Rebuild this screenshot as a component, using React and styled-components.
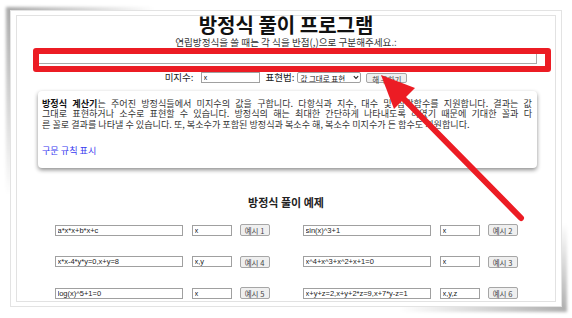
import React from 'react';
import styled, { createGlobalStyle } from 'styled-components';

const RED = '#ec1c24';
const KR = '"Noto Sans CJK KR", "Noto Sans", sans-serif';
const LATIN = '"Liberation Sans", "Noto Sans CJK KR", sans-serif';

const EXAMPLES = [
    { id: 1, eq: 'a*x*x+b*x+c', vars: 'x' },
    { id: 2, eq: 'sin(x)^3+1', vars: 'x' },
    { id: 4, eq: 'x*x-4*y*y=0,x+y=8', vars: 'x,y' },
    { id: 3, eq: 'x^4+x^3+x^2+x+1=0', vars: 'x' },
    { id: 5, eq: 'log(x)^5+1=0', vars: 'x' },
    { id: 6, eq: 'x+y+z=2,x+y+2*z=9,x+7*y-z=1', vars: 'x,y,z' },
];

const GlobalStyle = createGlobalStyle`
    html, body {
        margin: 0;
        padding: 0;
        background: #fff;
    }
    body {
        font-family: ${KR};
        color: #222;
    }
`;

const Canvas = styled.div`
    position: relative;
    width: 572px;
    height: 318px;
    box-sizing: border-box;
    padding: 10px 10px 0 10px;
    background: #fff;
    isolation: isolate;
    overflow: hidden;
`;

const Paper = styled.div`
    position: relative;
    height: 297px;
    box-sizing: border-box;
    padding: 4px 5px;
    border: 1px solid #e3e3e3;
    background: #fff;

    &::before {
        content: '';
        position: absolute;
        top: -4px;
        left: -5px;
        width: 150px;
        height: 190px;
        background: radial-gradient(ellipse at 0 0, rgba(0, 0, 0, 0.34), rgba(0, 0, 0, 0) 70%);
        filter: blur(1.5px);
        z-index: -1;
    }

    &::after {
        content: '';
        position: absolute;
        right: -6px;
        bottom: -6px;
        width: 170px;
        height: 90px;
        background: radial-gradient(ellipse at 100% 100%, rgba(0, 0, 0, 0.32), rgba(0, 0, 0, 0) 70%);
        filter: blur(1.5px);
        z-index: -1;
    }
`;

const Page = styled.div`
    height: 100%;
    box-sizing: border-box;
    border: 1px solid #e2e2e2;
    display: flex;
    flex-direction: column;
    align-items: center;
`;

const Title = styled.h1`
    margin: 0;
    font-size: 20px;
    line-height: 18px;
    font-weight: 700;
    color: #111;
`;

const Hint = styled.p`
    margin: 2px 0 0;
    font-size: 9.6px;
    line-height: 12px;
    color: #333;
`;

const EquationWrap = styled.div`
    position: relative;
    width: 502px;
    margin-top: 2px;
`;

const EquationInput = styled.input`
    display: block;
    width: 100%;
    height: 14px;
    box-sizing: border-box;
    border: 1px solid #aaa;
    padding: 0 2px;
    font: 8px ${LATIN};
`;

const RedMark = styled.div`
    position: absolute;
    top: -2px;
    left: -2px;
    right: -14px;
    bottom: -8px;
    border: 6px solid ${RED};
    border-radius: 3px;
    pointer-events: none;
`;

const ControlRow = styled.div`
    display: flex;
    align-items: center;
    height: 11px;
    margin-top: 8px;
`;

const Label = styled.label`
    font-size: 9.5px;
    line-height: 11px;
    color: #222;
    margin-right: ${(p) => p.$gap}px;
`;

const SmallInput = styled.input`
    box-sizing: border-box;
    width: ${(p) => p.$w}px;
    height: 11px;
    border: 1px solid #a0a0a0;
    padding: 0 2px;
    margin: 0 ${(p) => p.$after || 0}px 0 0;
    font: 7.5px ${LATIN};
    color: #222;
`;

const SelectWrap = styled.div`
    position: relative;
    width: 64px;
    height: 11px;
    margin-right: 5px;

    svg {
        position: absolute;
        right: 2px;
        top: 3px;
        pointer-events: none;
    }
`;

const Select = styled.select`
    appearance: none;
    display: block;
    width: 100%;
    height: 100%;
    box-sizing: border-box;
    border: 1px solid #a0a0a0;
    border-radius: 2px;
    padding: 0 2px;
    background: #fff;
    font: 7.5px ${KR};
    color: #222;
`;

const Button = styled.button`
    box-sizing: border-box;
    width: ${(p) => p.$w}px;
    height: ${(p) => p.$h}px;
    padding: 0;
    border: 1px solid #a6a6a6;
    border-radius: 2px;
    background: #efefef;
    font: 7.5px ${KR};
    color: #444;
    white-space: nowrap;
`;

const Card = styled.div`
    width: 499px;
    box-sizing: border-box;
    margin: 8px 0 0 3px;
    padding: 6.5px 5px 12.75px 4px;
    border-radius: 4px;
    background: #fff;
    box-shadow: 0 2px 4px rgba(0, 0, 0, 0.45);
`;

const Paragraph = styled.p`
    margin: ${(p) => p.$top || 0}px 0 0;
    font-size: 9.1px;
    line-height: 10.5px;
    color: #333;

    b {
        color: #111;
    }
`;

const Line = styled.span`
    display: block;
    text-align: justify;
    text-align-last: ${(p) => (p.$fill ? 'justify' : 'start')};
    white-space: nowrap;
`;

const Link = styled.a`
    color: #3a3af0;
    text-decoration: none;
`;

const SectionTitle = styled.h2`
    margin: 27px 0 0;
    font-size: 11px;
    line-height: 14px;
    font-weight: 700;
    color: #222;
`;

const ExampleGrid = styled.div`
    display: grid;
    grid-template-columns: repeat(2, auto);
    column-gap: 33px;
    row-gap: 19.5px;
    margin-top: 15.3px;
`;

const Example = styled.div`
    display: flex;
    align-items: center;
    height: 12px;
`;

const Arrow = styled.svg`
    position: absolute;
    left: 0;
    top: 0;
    z-index: 2;
    pointer-events: none;
`;

const App = () => {
    return (
        <Canvas>
            <GlobalStyle />
            <Paper>
                <Page>
                    <Title>방정식 풀이 프로그램</Title>
                    <Hint>연립방정식을 쓸 때는 각 식을 반점(,)으로 구분해주세요.:</Hint>
                    <EquationWrap>
                        <EquationInput type="text" defaultValue="" />
                        <RedMark />
                    </EquationWrap>
                    <ControlRow>
                        <Label $gap={7}>미지수:</Label>
                        <SmallInput $w={59} $after={6} defaultValue="x" />
                        <Label $gap={3}>표현법:</Label>
                        <SelectWrap>
                            <Select defaultValue="exact">
                                <option value="exact">값 그대로 표현</option>
                                <option value="decimal">소수로 표현</option>
                            </Select>
                            <svg width="6" height="5" viewBox="0 0 6 5">
                                <path d="M0.8 1.2 L3 3.4 L5.2 1.2" fill="none" stroke="#222" strokeWidth="1.1" />
                            </svg>
                        </SelectWrap>
                        <Button $w={41} $h={10}>해 구하기</Button>
                    </ControlRow>
                    <Card>
                        <Paragraph>
                            <Line $fill>
                                <b>방정식 계산기</b>는 주어진 방정식들에서 미지수의 값을 구합니다. 다항식과 지수, 대수 및 삼각함수를 지원합니다. 결과는 값
                            </Line>
                            <Line $fill>
                                그대로 표현하거나 소수로 표현할 수 있습니다. 방정식의 해는 최대한 간단하게 나타내도록 하였기 때문에 기대한 꼴과 다
                            </Line>
                            <Line>
                                른 꼴로 결과를 나타낼 수 있습니다. 또, 복소수가 포함된 방정식과 복소수 해, 복소수 미지수가 든 함수도 지원합니다.
                            </Line>
                        </Paragraph>
                        <Paragraph $top={15.5}>
                            <Link href="#syntax">구문 규칙 표시</Link>
                        </Paragraph>
                    </Card>
                    <SectionTitle>방정식 풀이 예제</SectionTitle>
                    <ExampleGrid>
                        {EXAMPLES.map((ex) => (
                            <Example key={ex.id}>
                                <SmallInput $w={128} $after={9} defaultValue={ex.eq} />
                                <SmallInput $w={40} $after={8} defaultValue={ex.vars} />
                                <Button $w={30} $h={12}>예시 {ex.id}</Button>
                            </Example>
                        ))}
                    </ExampleGrid>
                </Page>
            </Paper>
            <Arrow width="572" height="318" viewBox="0 0 572 318">
                <line x1="521" y1="218" x2="398" y2="93" stroke={RED} strokeWidth="6" strokeLinecap="round" />
                <polygon points="381,75 415,88 394,109" fill={RED} />
            </Arrow>
        </Canvas>
    );
};

export default App;
